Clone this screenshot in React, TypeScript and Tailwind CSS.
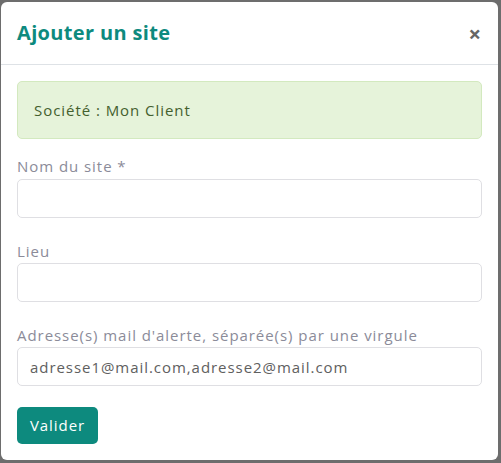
export default function App() {
  const font = { fontFamily: '"Open Sans", "Liberation Sans", sans-serif' };
  return (
    <div className="w-[501px] h-[463px] bg-[#6d6d6d] pt-[2px] pl-[1px] pr-[3px] pb-[3px]" style={font}>
      <div className="h-full bg-white rounded-[6px] flex flex-col">
        <header className="h-[63px] flex items-center justify-between px-4 border-b border-[#dee2e6]">
          <h2 className="text-[20px] font-bold text-[#0d8a7e] tracking-[0.35px]">Ajouter un site</h2>
          <button className="text-[#666] text-[22px] font-bold leading-none mr-[1px]">×</button>
        </header>
        <div className="px-4 pt-4 text-[15px] tracking-[0.95px]">
          <div className="h-[58px] flex items-center px-4 rounded-[5px] bg-[#e6f3da] border border-[#d3e9bf] text-[#44602e]">
            Société : Mon Client
          </div>
          <label className="block mt-4 leading-[22px] text-[#8b8b99]">Nom du site *</label>
          <input className="block mt-[2px] w-full h-[39px] rounded-[5px] border border-[#dfdfe3] px-3 outline-none" />
          <label className="block mt-[22px] leading-[22px] text-[#8b8b99]">Lieu</label>
          <input className="block mt-[1px] w-full h-[39px] rounded-[5px] border border-[#dfdfe3] px-3 outline-none" />
          <label className="block mt-[22px] leading-[22px] text-[#8b8b99]">Adresse(s) mail d'alerte, séparée(s) par une virgule</label>
          <input
            className="block mt-[1px] w-full h-[39px] rounded-[5px] border border-[#dfdfe3] px-3 outline-none text-[#606060] placeholder:text-[#606060] tracking-[0.95px]"
            placeholder="adresse1@mail.com,adresse2@mail.com"
          />
          <button className="mt-[21px] h-[37px] w-[81px] rounded-[5px] bg-[#0d8a7e] text-white text-[15px] tracking-[0.95px]">Valider</button>
        </div>
      </div>
    </div>
  );
}
